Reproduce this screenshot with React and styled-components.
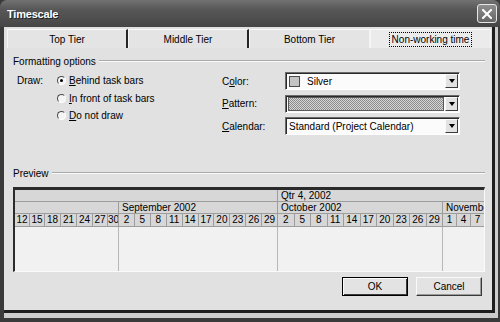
import React from 'react';
import styled, { createGlobalStyle } from 'styled-components';

const GlobalStyle = createGlobalStyle`
  html, body {
    margin: 0;
    padding: 0;
    background: #3a3a3a;
  }
  body {
    font-family: "Liberation Sans", Arial, sans-serif;
    font-size: 10px;
    color: #000;
  }
`;

const MONTHS = [
  { name: '', width: 104, days: ['12', '15', '18', '21', '24', '27', '30'], dayWidths: [15, 15, 16, 16, 16, 15, 11] },
  { name: 'September 2002', width: 159, days: ['2', '5', '8', '11', '14', '17', '20', '23', '26', '29'] },
  { name: 'October 2002', width: 165, days: ['2', '5', '8', '11', '14', '17', '20', '23', '26', '29'] },
  { name: 'November 2002', width: 56, days: ['1', '4', '7'], dayWidths: [14, 14, 14] },
];

const QUARTERS = [
  { name: '', width: 263 },
  { name: 'Qtr 4, 2002', width: 221 },
];

const Window = styled.div`
  width: 500px;
  height: 322px;
  display: flex;
  flex-direction: column;
  background: #3a3a3a;
  overflow: hidden;
`;

const TitleBar = styled.div`
  height: 27px;
  flex: none;
  box-sizing: border-box;
  display: flex;
  align-items: center;
  justify-content: space-between;
  padding: 0 3px 0 7px;
  background: linear-gradient(#727272, #575757 35%, #4d4d4d 75%, #454545);
  border-radius: 7px 7px 0 0;
`;

const Title = styled.span`
  color: #fff;
  font-weight: bold;
  font-size: 11px;
  letter-spacing: -0.2px;
  text-shadow: 1px 1px 0 #1f1f1f;
`;

const CloseButton = styled.div`
  width: 20px;
  height: 19px;
  box-sizing: border-box;
  border: 1px solid #e6e6e6;
  border-radius: 3px;
  background: linear-gradient(#8e8e8e, #666);
  display: flex;
  align-items: center;
  justify-content: center;
`;

const Bezel = styled.div`
  flex: 1;
  min-height: 0;
  display: flex;
  margin: 0 2px 4px 4px;
  padding: 0 3px 5px 0;
  background: #cdcdcd;
`;

const Client = styled.div`
  flex: 1;
  min-width: 0;
  overflow: hidden;
  display: flex;
  flex-direction: column;
  background: #e1e1e1;
  border-right: 3px solid #1e1e1e;
  border-bottom: 3px solid #1e1e1e;
`;

const TabStrip = styled.div`
  display: flex;
  padding: 2px 0 0 3px;
`;

const Tab = styled.div`
  width: 121px;
  height: 19px;
  box-sizing: border-box;
  display: flex;
  align-items: center;
  justify-content: center;
  background: ${(p) => (p.$active ? '#ebebeb' : '#e4e4e4')};
  border-top: 1px solid #fafafa;
  border-left: 1px solid #f6f6f6;
  border-right: ${(p) => (p.$divider ? '2px solid #262626' : '1px solid #f4f4f4')};
`;

const FocusLabel = styled.span`
  outline: 1px dotted #000;
  outline-offset: 1px;
  padding: 0 1px;
`;

const Panel = styled.div`
  flex: 1;
  min-width: 0;
  display: flex;
  flex-direction: column;
  padding: 0 7px 0 9px;
`;

const Legend = styled.div`
  display: flex;
  align-items: center;
  gap: 3px;
  height: 12px;
  margin-top: ${(p) => p.$top}px;
`;

const LegendRule = styled.div`
  flex: 1;
  border-top: 1px solid #a9a9a9;
  border-bottom: 1px solid #fbfbfb;
`;

const Options = styled.div`
  display: flex;
  margin-top: 5px;
  padding-left: 4px;
`;

const DrawBlock = styled.div`
  width: 205px;
  display: flex;
`;

const DrawLabel = styled.div`
  width: 40px;
  height: 17px;
  line-height: 17px;
`;

const RadioList = styled.div`
  display: flex;
  flex-direction: column;
`;

const RadioRow = styled.div`
  height: 17.5px;
  display: flex;
  align-items: center;
  gap: 3px;
`;

const Radio = styled.span`
  width: 9px;
  height: 9px;
  box-sizing: border-box;
  border-radius: 50%;
  border: 1px solid;
  border-color: #4a4a4a #fff #fff #4a4a4a;
  background: #f4f4f4;
  display: flex;
  align-items: center;
  justify-content: center;

  &::after {
    content: '';
    width: 3px;
    height: 3px;
    border-radius: 50%;
    background: ${(p) => (p.$checked ? '#000' : 'transparent')};
  }
`;

const FieldGrid = styled.div`
  display: grid;
  grid-template-columns: 63px 175px;
  grid-auto-rows: 18px;
  row-gap: 4.5px;
  align-items: center;
`;

const Combo = styled.div`
  height: 18px;
  box-sizing: border-box;
  display: flex;
  align-items: stretch;
  border: 1px solid;
  border-color: #6a6a6a #fff #fff #6a6a6a;
  box-shadow: inset 1px 1px 0 #2a2a2a;
  background: #fbfbfb;
  padding: 1px 1px 1px 2px;
`;

const ComboValue = styled.div`
  flex: 1;
  display: flex;
  align-items: center;
  gap: 7px;
  padding-left: 1px;
`;

const Swatch = styled.span`
  width: 11px;
  height: 11px;
  box-sizing: border-box;
  border: 1px solid #4c4c4c;
  background: #c4c4c4;
`;

const PatternFill = styled.div`
  flex: 1;
  margin-right: 1px;
  border: 1px solid #5a5a5a;
  background: repeating-conic-gradient(#8c8c8c 0 25%, #d6d6d6 0 50%) 0 0 / 2px 2px;
`;

const ComboButton = styled.div`
  width: 13px;
  box-sizing: border-box;
  display: flex;
  align-items: center;
  justify-content: center;
  background: #e2e2e2;
  border: 1px solid;
  border-color: #fafafa #3c3c3c #3c3c3c #fafafa;

  &::after {
    content: '';
    border-left: 3.5px solid transparent;
    border-right: 3.5px solid transparent;
    border-top: 4px solid #000;
  }
`;

const Chart = styled.div`
  height: 85px;
  box-sizing: border-box;
  margin-top: 8px;
  display: flex;
  flex-direction: column;
  overflow: hidden;
  border-top: 3px solid #2b2b2b;
  border-left: 2px solid #2b2b2b;
  border-right: 1px solid #fafafa;
  border-bottom: 1px solid #fafafa;
`;

const HeaderRow = styled.div`
  display: flex;
  flex: none;
  height: ${(p) => p.$h}px;
  background: #d7d7d7;
  border-bottom: 1px solid #9d9d9d;
`;

const HeadCell = styled.div`
  flex: none;
  width: ${(p) => p.$w}px;
  box-sizing: border-box;
  border-right: 1px solid #9d9d9d;
  padding-left: 3px;
  line-height: ${(p) => p.$h}px;
  white-space: nowrap;
  overflow: hidden;
`;

const MonthDays = styled.div`
  flex: none;
  width: ${(p) => p.$w}px;
  display: flex;
`;

const DayCell = styled.div`
  flex: ${(p) => (p.$w ? 'none' : '1')};
  width: ${(p) => (p.$w ? `${p.$w}px` : 'auto')};
  box-sizing: border-box;
  border-right: 1px solid #9d9d9d;
  text-align: center;
  line-height: 12px;
  white-space: nowrap;
  overflow: hidden;
`;

const ChartBody = styled.div`
  flex: 1;
  display: flex;
  background: #f1f1f1;
`;

const BodyColumn = styled.div`
  flex: none;
  width: ${(p) => p.$w}px;
  box-sizing: border-box;
  border-right: 1px solid #b6b6b6;
`;

const ButtonRow = styled.div`
  display: flex;
  justify-content: flex-end;
  gap: 8px;
  margin-top: 5px;
  padding-right: 3px;
`;

const Button = styled.div`
  width: 66px;
  height: 19px;
  box-sizing: border-box;
  display: flex;
  align-items: center;
  justify-content: center;
  background: #e3e3e3;
  border: 1px solid;
  border-color: ${(p) => (p.$default ? '#000' : '#fafafa #3a3a3a #3a3a3a #fafafa')};
  box-shadow: ${(p) =>
    p.$default
      ? 'inset 1px 1px 0 #fafafa, inset -1px -1px 0 #3a3a3a'
      : 'inset -1px -1px 0 #9a9a9a'};
`;

function RadioOption({ checked, mnemonic, rest }) {
  return (
    <RadioRow>
      <Radio $checked={checked} />
      <span>
        <u>{mnemonic}</u>
        {rest}
      </span>
    </RadioRow>
  );
}

function Timeline() {
  return (
    <Chart>
      <HeaderRow $h={11}>
        {QUARTERS.map((q, i) => (
          <HeadCell key={i} $w={q.width} $h={11}>
            {q.name}
          </HeadCell>
        ))}
      </HeaderRow>
      <HeaderRow $h={11}>
        {MONTHS.map((m, i) => (
          <HeadCell key={i} $w={m.width} $h={11}>
            {m.name}
          </HeadCell>
        ))}
      </HeaderRow>
      <HeaderRow $h={12}>
        {MONTHS.map((m, i) => (
          <MonthDays key={i} $w={m.width}>
            {m.days.map((d, j) => (
              <DayCell key={j} $w={m.dayWidths ? m.dayWidths[j] : 0}>
                {d}
              </DayCell>
            ))}
          </MonthDays>
        ))}
      </HeaderRow>
      <ChartBody>
        {MONTHS.map((m, i) => (
          <BodyColumn key={i} $w={m.width} />
        ))}
      </ChartBody>
    </Chart>
  );
}

export default function App() {
  return (
    <>
      <GlobalStyle />
      <Window>
        <TitleBar>
          <Title>Timescale</Title>
          <CloseButton>
            <svg width="10" height="10" viewBox="0 0 10 10">
              <path d="M1 1 L9 9 M9 1 L1 9" stroke="#fff" strokeWidth="2" strokeLinecap="square" />
            </svg>
          </CloseButton>
        </TitleBar>
        <Bezel>
          <Client>
            <TabStrip>
              <Tab $divider>Top Tier</Tab>
              <Tab $divider>Middle Tier</Tab>
              <Tab>Bottom Tier</Tab>
              <Tab $active>
                <FocusLabel>Non-working time</FocusLabel>
              </Tab>
            </TabStrip>
            <Panel>
              <Legend $top={7}>
                <span>Formatting options</span>
                <LegendRule />
              </Legend>
              <Options>
                <DrawBlock>
                  <DrawLabel>Draw:</DrawLabel>
                  <RadioList>
                    <RadioOption checked mnemonic="B" rest="ehind task bars" />
                    <RadioOption mnemonic="I" rest="n front of task bars" />
                    <RadioOption mnemonic="D" rest="o not draw" />
                  </RadioList>
                </DrawBlock>
                <FieldGrid>
                  <span>
                    C<u>o</u>lor:
                  </span>
                  <Combo>
                    <ComboValue>
                      <Swatch />
                      <span>Silver</span>
                    </ComboValue>
                    <ComboButton />
                  </Combo>
                  <span>
                    <u>P</u>attern:
                  </span>
                  <Combo>
                    <PatternFill />
                    <ComboButton />
                  </Combo>
                  <span>
                    <u>C</u>alendar:
                  </span>
                  <Combo>
                    <ComboValue>Standard (Project Calendar)</ComboValue>
                    <ComboButton />
                  </Combo>
                </FieldGrid>
              </Options>
              <Legend $top={32}>
                <span>Preview</span>
                <LegendRule />
              </Legend>
              <Timeline />
              <ButtonRow>
                <Button $default>OK</Button>
                <Button>Cancel</Button>
              </ButtonRow>
            </Panel>
          </Client>
        </Bezel>
      </Window>
    </>
  );
}
